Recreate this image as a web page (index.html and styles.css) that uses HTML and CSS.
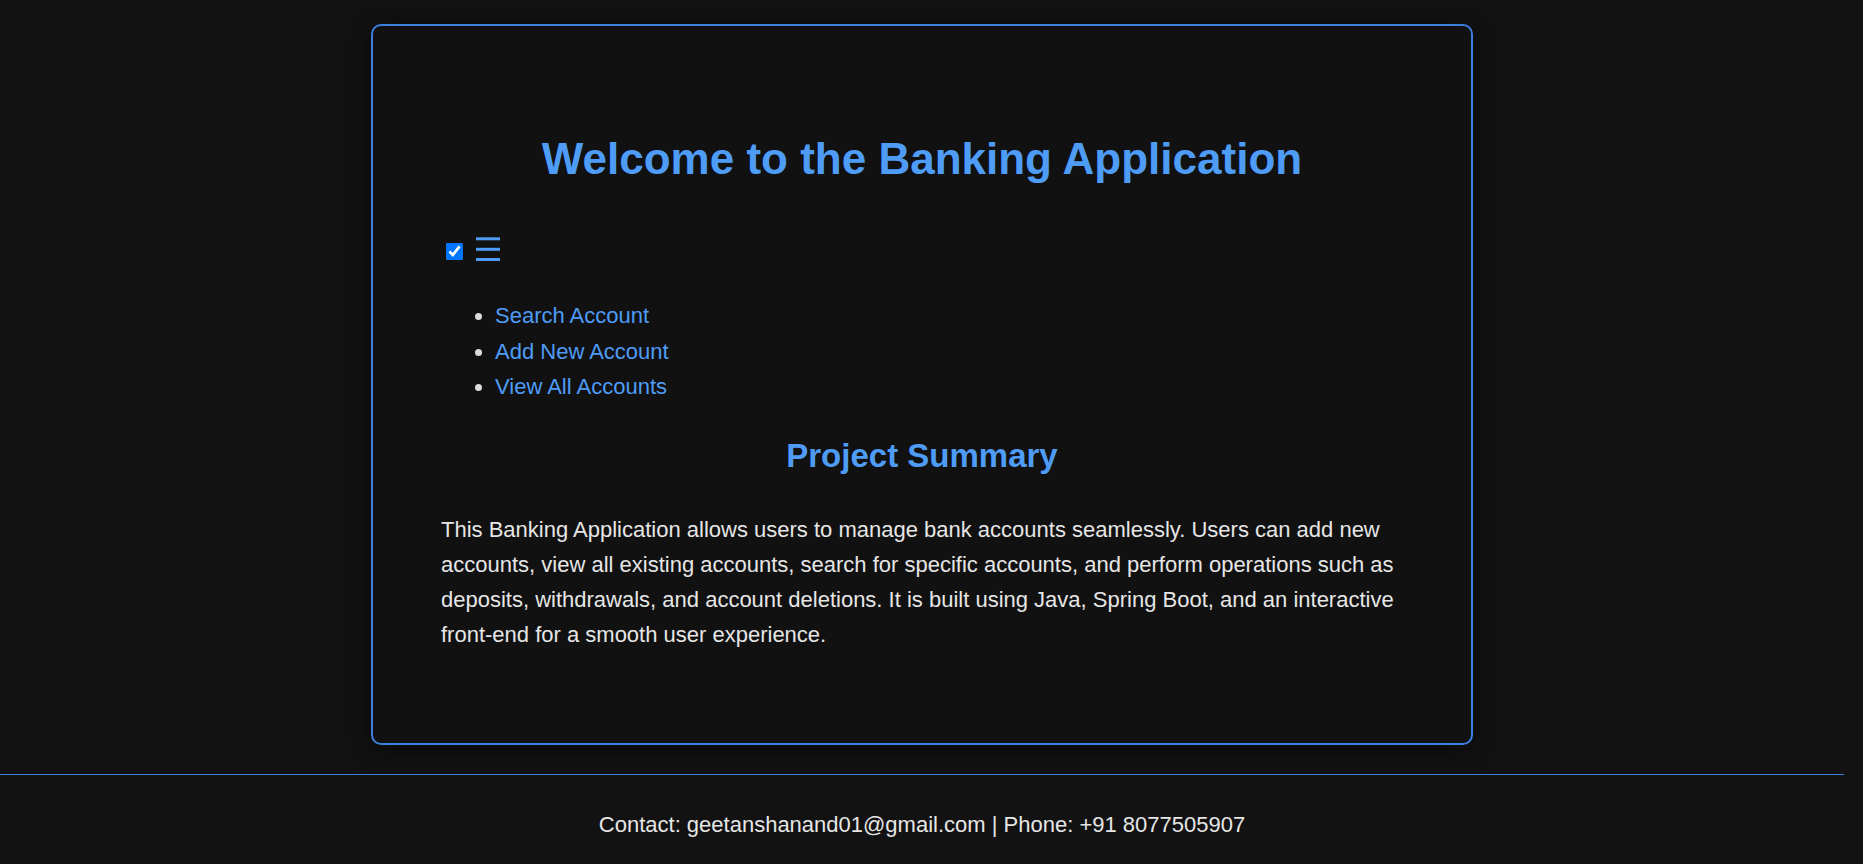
FILE: index.html
```html
<!DOCTYPE html>
<html lang="en">
<head>
<meta charset="UTF-8">
<title>Banking Application</title>
<link rel="stylesheet" href="styles.css">
</head>
<body>
  <main class="page">
    <section class="card">
      <h1 class="title">Welcome to the Banking Application</h1>
      <nav class="nav">
        <div class="nav-toggle">
          <input type="checkbox" class="nav-check" checked>
          <svg class="burger" width="24" height="24" viewBox="0 0 24 24" aria-hidden="true">
            <rect x="0" y="0.3" width="24" height="3" fill="#4f9cf6"/>
            <rect x="0" y="10.8" width="24" height="3" fill="#4f9cf6"/>
            <rect x="0" y="21" width="24" height="3" fill="#4f9cf6"/>
          </svg>
        </div>
        <ul class="menu">
          <li><a href="#">Search Account</a></li>
          <li><a href="#">Add New Account</a></li>
          <li><a href="#">View All Accounts</a></li>
        </ul>
      </nav>
      <h2 class="subtitle">Project Summary</h2>
      <p class="summary">This Banking Application allows users to manage bank accounts seamlessly. Users can add new accounts, view all existing accounts, search for specific accounts, and perform operations such as deposits, withdrawals, and account deletions. It is built using Java, Spring Boot, and an interactive front-end for a smooth user experience.</p>
    </section>
  </main>
  <footer class="footer">
    <p class="footer-text">Contact: geetanshanand01@gmail.com | Phone: +91 8077505907</p>
  </footer>
</body>
</html>
```

FILE: styles.css
```css
html {
  background: #121212;
  overflow: hidden;
}

body {
  margin: 0 19px 0 0;
  background: #121212;
  color: #e6e6e6;
  font-family: "Liberation Sans", Arial, sans-serif;
  font-size: 22px;
}

.page {
  padding-top: 24px;
  padding-bottom: 29px;
}

.card {
  box-sizing: border-box;
  width: 1102px;
  margin: 0 auto;
  padding: 109px 68px 91px;
  background: #111111;
  border: 2px solid #3d7fdc;
  border-radius: 10px;
  box-shadow: 0 4px 22px rgba(0, 0, 0, 0.55);
}

.title {
  margin: 0 0 54px;
  font-size: 44px;
  line-height: 48px;
  font-weight: bold;
  color: #4f9cf6;
  text-align: center;
}

.nav-toggle {
  display: flex;
  align-items: flex-start;
  gap: 13px;
  height: 24px;
}

.nav-check {
  width: 17px;
  height: 17px;
  margin: 6px 0 0 5px;
}

.burger {
  display: block;
}

.menu {
  margin: 37px 0 0;
  padding-left: 54px;
  color: #dddddd;
}

.menu li {
  line-height: 35.5px;
}

.menu a {
  color: #4f9cf6;
  text-decoration: none;
}

.subtitle {
  margin: 33.5px 0 0;
  font-size: 33px;
  line-height: 36px;
  font-weight: bold;
  color: #4f9cf6;
  text-align: center;
}

.summary {
  margin: 37.7px 0 0;
  line-height: 35px;
  color: #e6e6e6;
}

.footer {
  border-top: 1px solid #3d7fdc;
  padding: 33px 0 15px;
  text-align: center;
}

.footer-text {
  margin: 0;
  line-height: 34.5px;
  color: #e6e6e6;
}
```
